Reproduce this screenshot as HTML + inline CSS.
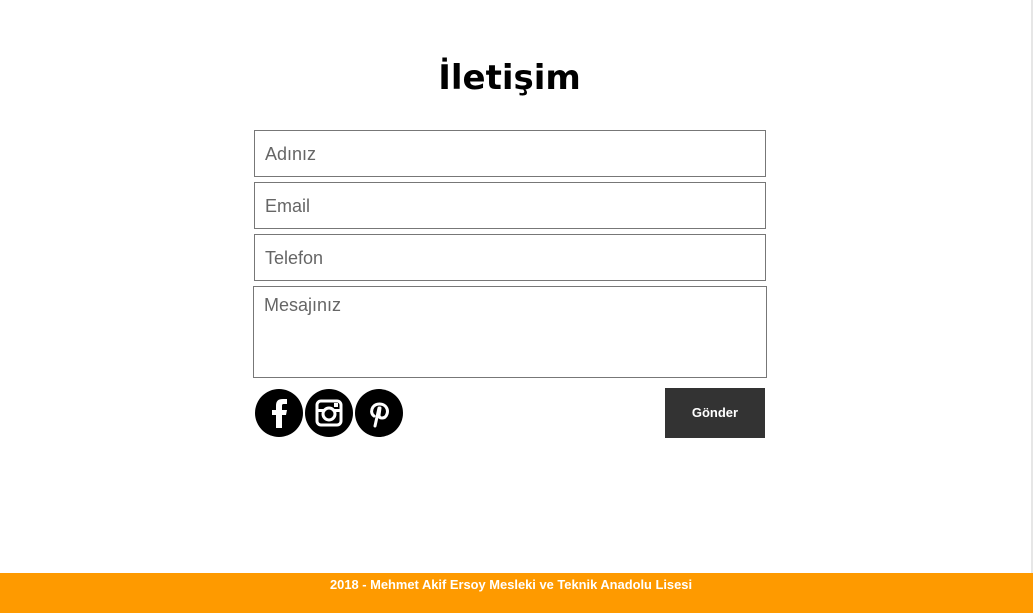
<!DOCTYPE html>
<html><head><meta charset="utf-8"><style>
body{margin:0;width:1033px;height:613px;background:#fff;position:relative;overflow:hidden;font-family:"Liberation Sans","DejaVu Sans",sans-serif}
.edge{position:absolute;right:0;top:0;width:2px;height:573px;background:#e6e6e6}
h1{position:absolute;top:58px;left:0;width:1019px;text-align:center;margin:0;font-family:"Comic Sans MS","DejaVu Sans",sans-serif;font-size:34px;font-weight:bold;color:#000}
.in{position:absolute;left:254px;width:512px;height:45px;border:1px solid #777;box-sizing:border-box;font-size:18px;color:#666;padding:13px 10px;line-height:20px}
.ta{left:253px;width:514px;height:92px;padding:8px 10px}
.ico{position:absolute;top:389px;width:48px;height:48px;border-radius:50%;background:#000}
.btn{position:absolute;left:665px;top:388px;width:100px;height:50px;background:#333;color:#fff;font-size:13px;text-align:center;line-height:50px;font-weight:bold}
.foot{position:absolute;left:0;top:573px;width:1033px;height:40px;background:#fe9a00;color:#fff;font-size:12.9px;font-weight:bold}
.foot span{position:absolute;left:330px;top:4px}
</style></head><body>
<div class="edge"></div>
<h1>İletişim</h1>
<div class="in" style="top:130px;height:47px">Adınız</div>
<div class="in" style="top:182px;height:47px">Email</div>
<div class="in" style="top:234px;height:47px">Telefon</div>
<div class="in ta" style="top:286px">Mesajınız</div>
<div class="ico" style="left:255px"><svg width="48" height="48" viewBox="0 0 48 48"><path d="M21 39V26h-4v-5h4v-4c0-5 2-7 7-7h4v5h-3c-2 0-2 1-2 2v4h5l-1 5h-4v13z" fill="#fff"/></svg></div>
<div class="ico" style="left:305px"><svg width="48" height="48" viewBox="0 0 48 48"><rect x="12" y="12" width="24" height="24" rx="4" fill="none" stroke="#fff" stroke-width="3"/><rect x="12" y="20" width="24" height="3" fill="#fff"/><circle cx="24" cy="25" r="6" fill="#000" stroke="#fff" stroke-width="3"/><rect x="29" y="14" width="4" height="4" fill="#fff"/></svg></div>
<div class="ico" style="left:355px"><svg width="48" height="48" viewBox="0 0 48 48"><path d="M19 27c-3-2-3-6-1-9 3-4 10-4 13 0 3 4 1 11-4 11-2 0-3-1-3-3l1-7M24 19l-4 18" fill="none" stroke="#fff" stroke-width="3" stroke-linecap="round"/></svg></div>
<div class="btn">Gönder</div>
<div class="foot"><span>2018 - Mehmet Akif Ersoy Mesleki ve Teknik Anadolu Lisesi</span></div>
</body></html>
